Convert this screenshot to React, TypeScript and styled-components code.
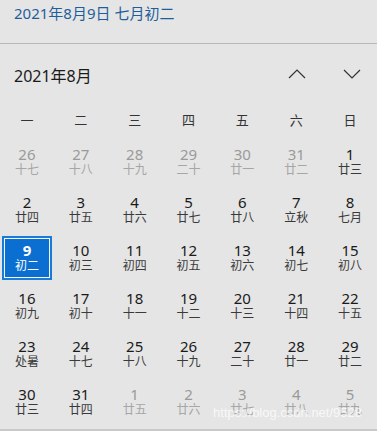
import React from "react";
import styled, { createGlobalStyle } from "styled-components";

const Global = createGlobalStyle`
  html, body { margin: 0; padding: 0; background: #e5e5e5; }
  #root { width: 377px; height: 431px; overflow: hidden; }
`;

const FONT = `"Segoe UI", "Noto Sans", "Noto Sans CJK SC", sans-serif`;

const Panel = styled.div`
  position: relative;
  width: 377px;
  height: 431px;
  background: #e5e5e5;
  font-family: ${FONT};
  box-sizing: border-box;
  border-bottom: 2px solid #c9c9c9;
  overflow: hidden;
`;

const Header = styled.div`
  height: 44px;
  box-sizing: border-box;
  padding: 1px 0 0 14px;
  border-bottom: 1px solid #b8b8b8;
  color: #1f5e9c;
  font-size: 15px;
  line-height: 24px;
`;

const MonthBar = styled.div`
  height: 60px;
  display: flex;
  align-items: center;
  padding: 0 16px 0 14px;
`;

const MonthTitle = styled.div`
  flex: 1;
  font-size: 16px;
  color: #1a1a1a;
  padding-top: 1px;
`;

const NavButtons = styled.div`
  display: flex;
  gap: 37px;
  align-items: center;
`;

const NavButton = styled.div`
  width: 18px;
  height: 18px;
  display: flex;
  align-items: center;
  justify-content: center;
`;

const WeekRow = styled.div`
  display: grid;
  grid-template-columns: repeat(7, 1fr);
  height: 30px;
  align-items: center;
`;

const WeekDay = styled.div`
  text-align: center;
  font-size: 13px;
  color: #333;
`;

const DaysGrid = styled.div`
  display: grid;
  grid-template-columns: repeat(7, 1fr);
  grid-auto-rows: 48px;
  padding-top: 4px;
`;

const Cell = styled.div`
  display: flex;
  align-items: stretch;
  justify-content: stretch;
  padding: 2px;
`;

const CellBox = styled.div<{ $selected?: boolean }>`
  flex: 1;
  display: flex;
  flex-direction: column;
  align-items: center;
  justify-content: center;
  box-sizing: border-box;
  border: 2px solid ${(p) => (p.$selected ? "#1a7ad6" : "transparent")};
  background: ${(p) => (p.$selected ? "#0a6fd0" : "transparent")};
  box-shadow: ${(p) => (p.$selected ? "inset 0 0 0 1px #f2f7fc" : "none")};
  padding-bottom: 1px;
`;

const DayNum = styled.div<{ $muted?: boolean; $selected?: boolean }>`
  font-size: 15px;
  line-height: 16px;
  font-weight: ${(p) => (p.$selected ? 700 : 400)};
  color: ${(p) => (p.$selected ? "#fff" : p.$muted ? "#9a9a9a" : "#1a1a1a")};
`;

const Lunar = styled.div<{ $muted?: boolean; $selected?: boolean }>`
  font-size: 12px;
  line-height: 15px;
  color: ${(p) => (p.$selected ? "#fff" : p.$muted ? "#a6a6a6" : "#3a3a3a")};
`;

const Watermark = styled.div`
  position: absolute;
  right: 15px;
  bottom: 9px;
  font-family: "Liberation Sans", Arial, sans-serif;
  font-size: 13px;
  color: rgba(255, 255, 255, 0.75);
  pointer-events: none;
`;

const Chevron = ({ up }: { up?: boolean }) => (
  <svg width="18" height="10" viewBox="0 0 18 10">
    <polyline
      points={up ? "1,9 9,1 17,9" : "1,1 9,9 17,1"}
      fill="none"
      stroke="#333"
      strokeWidth="1.2"
    />
  </svg>
);

type Day = { n: number; l: string; muted?: boolean; sel?: boolean };

const prev: Day[] = [
  [26, "十七"], [27, "十八"], [28, "十九"], [29, "二十"], [30, "廿一"], [31, "廿二"],
].map(([n, l]) => ({ n: n as number, l: l as string, muted: true }));

const augLunar = [
  "廿三", "廿四", "廿五", "廿六", "廿七", "廿八", "立秋", "七月", "初二", "初三",
  "初四", "初五", "初六", "初七", "初八", "初九", "初十", "十一", "十二", "十三",
  "十四", "十五", "处暑", "十七", "十八", "十九", "二十", "廿一", "廿二", "廿三", "廿四",
];
const aug: Day[] = augLunar.map((l, i) => ({ n: i + 1, l, sel: i + 1 === 9 }));

const next: Day[] = [
  [1, "廿五"], [2, "廿六"], [3, "廿七"], [4, "廿八"], [5, "廿九"],
].map(([n, l]) => ({ n: n as number, l: l as string, muted: true }));

const days = [...prev, ...aug, ...next];
const weekdays = ["一", "二", "三", "四", "五", "六", "日"];

export default function App() {
  return (
    <>
      <Global />
      <Panel>
        <Header>2021年8月9日 七月初二</Header>
        <MonthBar>
          <MonthTitle>2021年8月</MonthTitle>
          <NavButtons>
            <NavButton><Chevron up /></NavButton>
            <NavButton><Chevron /></NavButton>
          </NavButtons>
        </MonthBar>
        <WeekRow>
          {weekdays.map((w) => (
            <WeekDay key={w}>{w}</WeekDay>
          ))}
        </WeekRow>
        <DaysGrid>
          {days.map((d, i) => (
            <Cell key={i}>
              <CellBox $selected={d.sel}>
                <DayNum $muted={d.muted} $selected={d.sel}>{d.n}</DayNum>
                <Lunar $muted={d.muted} $selected={d.sel}>{d.l}</Lunar>
              </CellBox>
            </Cell>
          ))}
        </DaysGrid>
        <Watermark>https://blog.csdn.net/9528</Watermark>
      </Panel>
    </>
  );
}
